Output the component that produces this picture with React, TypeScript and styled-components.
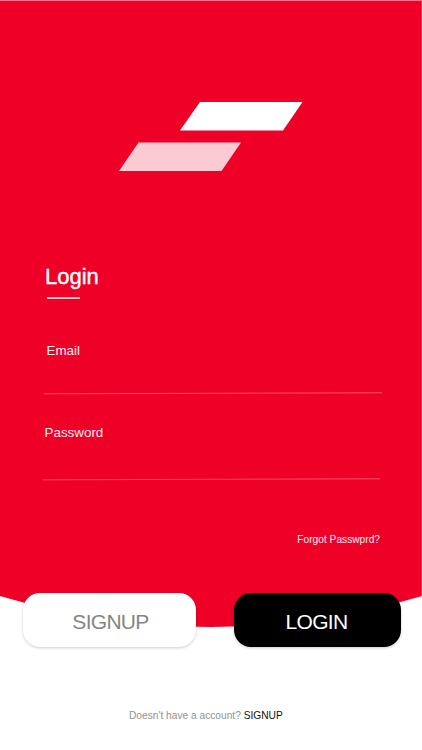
import React from "react";
import styled, { createGlobalStyle } from "styled-components";

const GlobalStyle = createGlobalStyle`
  *, *::before, *::after { box-sizing: border-box; }
  body { margin: 0; background: #fff; }
`;

const RED = "#ef0027";

const Screen = styled.main`
  display: flex;
  flex-direction: column;
  width: 422px;
  height: 750px;
  overflow: hidden;
  background: #fff;
  font-family: "Liberation Sans", Arial, sans-serif;
`;

const Hero = styled.section`
  display: flex;
  flex-direction: column;
  height: 596px;
  flex: none;
  padding: 0 40px 0 43px;
  background: ${RED};
  border-top: 1px solid #f9718b;
  border-right: 1px solid #f53b5a;
  color: #fff;
`;

const Logo = styled.svg`
  display: block;
  width: 184px;
  height: 70px;
  margin: 100px 0 0 76px;
  flex: none;
`;

const Title = styled.h1`
  margin: 94px 0 0 2px;
  height: 24px;
  line-height: 24px;
  font-size: 22px;
  font-weight: 400;
  -webkit-text-stroke: 0.4px #fff;
`;

const TitleRule = styled.div`
  width: 33px;
  height: 2px;
  margin: 8px 0 0 3.5px;
  background: linear-gradient(#fbb5c1 50%, #fcc5ce 50%);
`;

const Field = styled.label<{ $top: number; $indent: number; $gap: number }>`
  display: flex;
  flex-direction: column;
  gap: ${(p) => p.$gap}px;
  margin-top: ${(p) => p.$top}px;
  font-size: 13.4px;
  line-height: 16px;
  color: #ffeef1;

  span { padding-left: ${(p) => p.$indent}px; }
`;

const FieldLine = styled.svg`
  display: block;
  width: 340px;
  height: 3px;
`;

const Forgot = styled.a`
  align-self: flex-end;
  margin: 52px 1px 0 0;
  font-size: 10.2px;
  line-height: 14px;
  color: #fff0f2;
`;

const Curve = styled.svg`
  display: block;
  width: 422px;
  height: 32px;
  flex: none;
`;

const Actions = styled.div`
  position: relative;
  display: flex;
  gap: 38px;
  margin: -35px 21px 0 23px;
`;

const Button = styled.button<{ $dark?: boolean }>`
  width: ${(p) => (p.$dark ? 167 : 173)}px;
  height: 54px;
  padding: ${(p) => (p.$dark ? "3px 2px 0 0" : "3px 0 0 2px")};
  border: 0;
  border-radius: 17px;
  background: ${(p) => (p.$dark ? "#000" : "#fff")};
  color: ${(p) => (p.$dark ? "#fff" : "#858585")};
  box-shadow: 0 1px 3px rgba(0, 0, 0, 0.2);
  font: 21px "Liberation Sans", Arial, sans-serif;
  letter-spacing: -0.7px;
`;

const Footer = styled.p`
  margin: 62px 0 0 129px;
  font-size: 10.2px;
  line-height: 14px;
  white-space: nowrap;
  color: #929292;

  a { color: #111; }
`;

export default function App() {
  return (
    <>
      <GlobalStyle />
      <Screen>
        <Hero>
          <Logo viewBox="0 0 184 70" aria-hidden="true">
            <path d="M81 1H183.5L164 29.5H61Z" fill="#fff" />
            <path d="M19.5 41.5H122L102.5 70H0Z" fill="#fccad3" />
          </Logo>
          <Title>Login</Title>
          <TitleRule />
          <Field $top={44} $indent={3.5} $gap={33}>
            <span>Email</span>
            <FieldLine viewBox="0 0 340 3">
              <path d="M1 1.8L339 0.8" stroke="#fff" strokeOpacity="0.4" strokeWidth="0.8" />
            </FieldLine>
          </Field>
          <Field $top={30} $indent={1.5} $gap={37}>
            <span>Password</span>
            <FieldLine viewBox="0 0 340 3">
              <path d="M0 1.8L337 0.8" stroke="#fff" strokeOpacity="0.4" strokeWidth="0.8" />
            </FieldLine>
          </Field>
          <Forgot>Forgot Passwprd?</Forgot>
        </Hero>
        <Curve viewBox="0 0 422 32" aria-hidden="true">
          <path d="M0 0Q105 31 211 31Q317 31 422 0Z" fill={RED} />
        </Curve>
        <Actions>
          <Button>SIGNUP</Button>
          <Button $dark>LOGIN</Button>
        </Actions>
        <Footer>
          Doesn't have a account? <a>SIGNUP</a>
        </Footer>
      </Screen>
    </>
  );
}
